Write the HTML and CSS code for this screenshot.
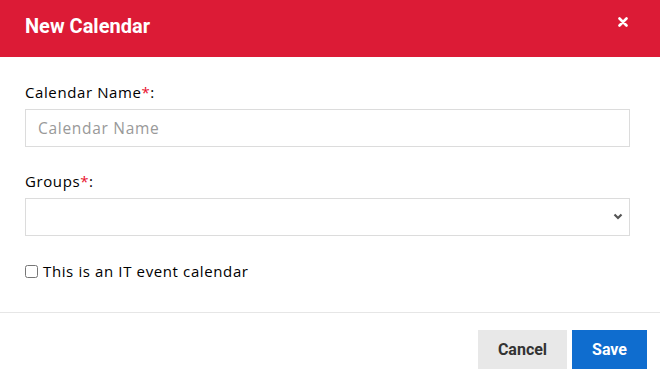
FILE: index.html
```html
<!DOCTYPE html>
<html lang="en">
<head>
  <meta charset="UTF-8" />
  <meta name="viewport" content="width=device-width, initial-scale=1.0"/>
  <title>New Calendar</title>
  <link rel="stylesheet" href="styles.css">
</head>
<body>
  <div class="modal">
    <div class="modal-header">
      <h2>New Calendar</h2>
      <button class="close-btn" aria-label="Close">
        <svg width="10" height="10" viewBox="0 0 10 10"><path d="M1.5 1.5 L8.5 8.5 M8.5 1.5 L1.5 8.5" stroke="#fff" stroke-width="2.6" stroke-linecap="round"/></svg>
      </button>
    </div>
    <div class="modal-body">
      <div class="field">
        <label for="cal-name">Calendar Name<span class="req">*</span>:</label>
        <input type="text" id="cal-name" placeholder="Calendar Name" />
      </div>
      <div class="field">
        <label for="groups">Groups<span class="req">*</span>:</label>
        <div class="select-wrap">
          <select id="groups"><option></option></select>
          <svg class="chevron" width="10" height="7" viewBox="0 0 10 7"><path d="M1.5 1.5 L5 5 L8.5 1.5" fill="none" stroke="#555" stroke-width="2.2"/></svg>
        </div>
      </div>
      <label class="check">
        <input type="checkbox" /> This is an IT event calendar
      </label>
    </div>
    <div class="modal-footer">
      <button class="btn btn-cancel">Cancel</button>
      <button class="btn btn-save">Save</button>
    </div>
  </div>
</body>
</html>
```

FILE: styles.css
```css
body {
  margin: 0;
  background: #fff;
  font-family: 'Open Sans', sans-serif;
  color: #000;
}

.modal {
  width: 660px;
  height: 379px;
  display: flex;
  flex-direction: column;
}

.modal-header {
  background: #dc1b36;
  height: 57px;
  display: flex;
  align-items: center;
  justify-content: space-between;
  padding: 0 32px 0 25px;
  box-sizing: border-box;
}

.modal-header h2 {
  margin: 0;
  color: #fff;
  font-family: Roboto, sans-serif;
  font-weight: 700;
  font-size: 20px;
  margin-top: -5px;
}

.close-btn {
  background: none;
  border: none;
  padding: 0;
  cursor: pointer;
  display: flex;
  margin-top: -14px;
}

.modal-body {
  padding: 25px 30px 0 25px;
  height: 256px;
  box-sizing: border-box;
  border-bottom: 1px solid #e6e6e6;
}

.field {
  margin-bottom: 24px;
}

.field label {
  display: block;
  font-size: 15px;
  font-weight: 500;
  line-height: 20px;
  letter-spacing: 0.6px;
  margin-bottom: 7px;
}

.req {
  color: #e8112d;
}

.field input,
.field select {
  width: 100%;
  height: 38px;
  box-sizing: border-box;
  border: 1px solid #dcdcdc;
  background: #fff;
  padding: 0 12px;
  font-family: 'Open Sans', sans-serif;
  font-size: 15.5px;
  letter-spacing: 0.7px;
  outline: none;
}

.field input::placeholder {
  color: #999;
}

.select-wrap {
  position: relative;
}

.field select {
  appearance: none;
}

.chevron {
  position: absolute;
  right: 7px;
  top: 15px;
}

.check {
  display: flex;
  align-items: center;
  font-size: 15px;
  font-weight: 500;
  line-height: 20px;
  letter-spacing: 0.62px;
  margin-top: 25px;
}

.check input {
  margin: 0 5px 0 0;
  width: 13px;
  height: 13px;
}

.modal-footer {
  display: flex;
  justify-content: flex-end;
  gap: 5px;
  padding: 17px 13px 0 0;
}

.btn {
  border: none;
  height: 39px;
  font-family: Roboto, sans-serif;
  font-weight: 700;
  font-size: 16px;
  cursor: pointer;
}

.btn-cancel {
  background: #e8e8e8;
  color: #333;
  width: 89px;
}

.btn-save {
  background: #0f6dcf;
  color: #fff;
  width: 75px;
}
```
